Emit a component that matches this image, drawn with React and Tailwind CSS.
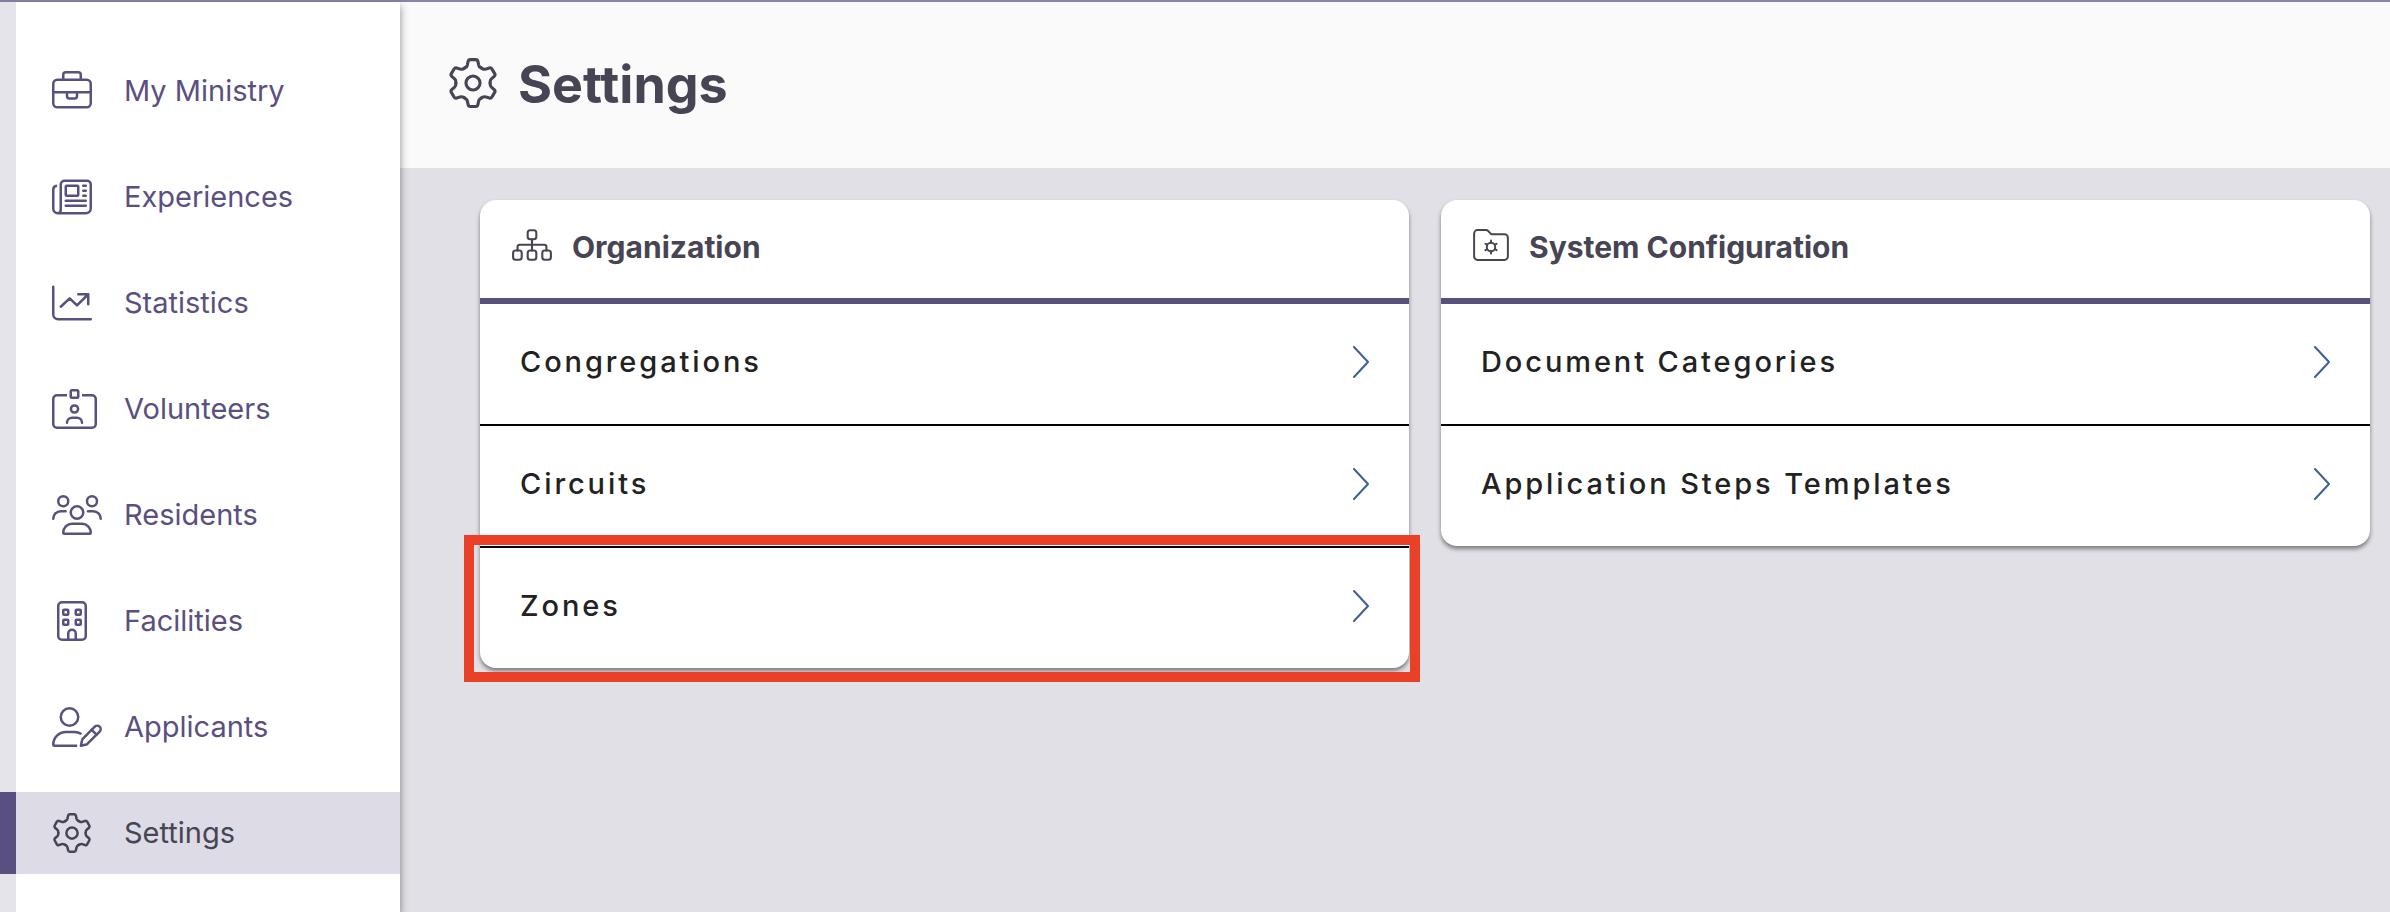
import clsx from 'clsx';

// Every icon is drawn on a 512 high grid, the wider ones only grow sideways
function Icon({ width = 512, stroke = 32, className, children }) {
  return (
    <svg
      viewBox={`0 0 ${width} 512`}
      className={className}
      fill="none"
      stroke="currentColor"
      strokeWidth={stroke}
      strokeLinecap="round"
      strokeLinejoin="round"
      aria-hidden="true"
    >
      {children}
    </svg>
  );
}

function BriefcaseIcon() {
  return (
    <Icon className="h-10 w-10">
      <rect x="16" y="112" width="480" height="352" rx="52" />
      <path d="M144 112V48a32 32 0 0 1 32-32H336a32 32 0 0 1 32 32V112" />
      <path d="M16 272H496M192 272v48a32 32 0 0 0 32 32h64a32 32 0 0 0 32-32v-48" />
    </Icon>
  );
}

function NewspaperIcon() {
  return (
    <Icon className="h-10 w-10">
      <path
        strokeLinecap="butt"
        d="M64 112C36 114 16 132 16 160V404a60 60 0 0 0 60 60H432a64 64 0 0 0 64-64V96a48 48 0 0 0-48-48H160a48 48 0 0 0-48 48V416c0 28-16 48-40 48"
      />
      <rect x="176" y="112" width="160" height="128" rx="12" />
      <path d="M400 112H432M400 176H432M400 240H432M176 304H432M176 368H432" />
    </Icon>
  );
}

function ChartIcon() {
  return (
    <Icon className="h-10 w-10">
      <path d="M16 48V400a64 64 0 0 0 64 64H496" />
      <path d="M112 304 226 196 320 286 464 144M336 144H464V272" />
    </Icon>
  );
}

function BadgeIcon() {
  return (
    <Icon width={576} className="h-10 w-[45px]">
      <path
        strokeLinecap="butt"
        d="M192 80H64a48 48 0 0 0-48 48V448a48 48 0 0 0 48 48H512a48 48 0 0 0 48-48V128a48 48 0 0 0-48-48H384"
      />
      <rect x="240" y="16" width="96" height="96" rx="16" />
      <circle cx="288" cy="256" r="46" />
      <path d="M192 432a64 64 0 0 1 64-64h64a64 64 0 0 1 64 64" />
    </Icon>
  );
}

function PeopleIcon() {
  return (
    <Icon width={640} className="h-10 w-[50px]">
      <circle cx="144" cy="80" r="64" />
      <circle cx="512" cy="80" r="64" />
      <circle cx="320" cy="224" r="80" />
      <path d="M16 304a96 96 0 0 1 96-96h62M624 304a96 96 0 0 0-96-96h-68" />
      <path d="M144 480a112 112 0 0 1 112-112h128a112 112 0 0 1 112 112a16 16 0 0 1-16 16H160a16 16 0 0 1-16-16z" />
    </Icon>
  );
}

function BuildingIcon() {
  return (
    <Icon className="h-10 w-10">
      <rect x="80" y="16" width="352" height="480" rx="48" />
      <rect x="144" y="112" width="64" height="64" rx="10" />
      <rect x="304" y="112" width="64" height="64" rx="10" />
      <rect x="144" y="240" width="64" height="64" rx="10" />
      <rect x="304" y="240" width="64" height="64" rx="10" />
      <path d="M208 496V416a48 48 0 0 1 96 0V496" />
    </Icon>
  );
}

function UserPenIcon() {
  return (
    <Icon width={640} className="h-10 w-[50px]">
      <circle cx="224" cy="128" r="112" />
      <path
        strokeLinecap="butt"
        d="M378 346C350 330 318 320 286 320H178C89 320 16 393 16 482a14 14 0 0 0 14 14H322"
      />
      <path d="M370 496 384 426Q386 414 396 404L548 252a43 43 0 0 1 62 62L458 466Q450 476 438 480Z" />
      <path d="M508 292l62 62" />
    </Icon>
  );
}

const toothAngles = [0, 60, 120, 180, 240, 300];

function GearIcon({ className }) {
  return (
    <Icon className={className}>
      <circle cx="256" cy="256" r="72" />
      {toothAngles.map((angle) => (
        <path
          key={angle}
          transform={`translate(256 256) rotate(${angle})`}
          d="M-88-152-76-159Q-62-167-58-184L-50-222Q-46-240-28-240H28Q46-240 50-222L58-184Q62-167 76-159L88-152"
        />
      ))}
    </Icon>
  );
}

function SitemapIcon() {
  return (
    <Icon width={576} stroke={30} className="h-9 w-10">
      <rect x="226" y="44" width="124" height="128" rx="36" />
      <rect x="16" y="336" width="124" height="132" rx="36" />
      <rect x="226" y="336" width="124" height="132" rx="36" />
      <rect x="436" y="336" width="124" height="132" rx="36" />
      <path d="M288 172V336M80 336V284a32 32 0 0 1 32-32H464a32 32 0 0 1 32 32V336" />
    </Icon>
  );
}

function FolderGearIcon() {
  return (
    <Icon stroke={28} className="h-9 w-9">
      <path d="M64 44H186Q204 44 216 56L262 104H448a48 48 0 0 1 48 48V420a48 48 0 0 1-48 48H64a48 48 0 0 1-48-48V92a48 48 0 0 1 48-48z" />
      <circle cx="256" cy="284" r="60" />
      {toothAngles.map((angle) => (
        <path key={angle} transform={`translate(256 284) rotate(${angle})`} d="M0-64V-92" />
      ))}
    </Icon>
  );
}

function ChevronIcon() {
  return (
    <svg
      viewBox="0 0 16 32"
      className="h-8 w-4 text-[#3f5f9b]"
      fill="none"
      stroke="currentColor"
      strokeWidth="2"
      strokeLinecap="round"
      strokeLinejoin="round"
      aria-hidden="true"
    >
      <path d="M1 1 15 16 1 31" />
    </svg>
  );
}

const navItems = [
  { label: 'My Ministry', icon: <BriefcaseIcon /> },
  { label: 'Experiences', icon: <NewspaperIcon /> },
  { label: 'Statistics', icon: <ChartIcon /> },
  { label: 'Volunteers', icon: <BadgeIcon /> },
  { label: 'Residents', icon: <PeopleIcon /> },
  { label: 'Facilities', icon: <BuildingIcon /> },
  { label: 'Applicants', icon: <UserPenIcon /> },
  { label: 'Settings', icon: <GearIcon className="h-10 w-10" />, active: true },
];

const sections = [
  {
    title: 'Organization',
    icon: <SitemapIcon />,
    links: [{ label: 'Congregations' }, { label: 'Circuits' }, { label: 'Zones', highlighted: true }],
  },
  {
    title: 'System Configuration',
    icon: <FolderGearIcon />,
    links: [{ label: 'Document Categories' }, { label: 'Application Steps Templates' }],
  },
];

function Sidebar() {
  return (
    <nav className="relative z-10 w-[400px] shrink-0 bg-white shadow-[0_4px_8px_rgba(0,0,0,0.45)]">
      <ul className="flex min-h-full flex-col gap-6 bg-linear-to-r from-[#e6e4eb] from-[16px] to-white to-[16px] pt-12">
        {navItems.map((item) => (
          <li key={item.label}>
            <a
              href="#"
              aria-current={item.active ? 'page' : undefined}
              className={clsx(
                'flex h-[82px] items-center border-l-16 pl-9 text-[29px]',
                item.active
                  ? 'border-[#5a5080] bg-[#dddbe5] text-[#474554]'
                  : 'border-transparent text-[#5a5080]'
              )}
            >
              <span className="w-[72px] shrink-0">{item.icon}</span>
              {item.label}
            </a>
          </li>
        ))}
      </ul>
    </nav>
  );
}

function SettingsCard({ title, icon, links }) {
  return (
    <section className="flex-1 rounded-2xl bg-white shadow-[0_3px_4px_rgba(0,0,0,0.45)]">
      <div className="flex h-[104px] items-center gap-5 border-b-6 border-[#5a5080] px-8 pb-2 text-[#474554]">
        {icon}
        <h2 className="pt-1 text-[30px] font-bold">{title}</h2>
      </div>
      <ul className="divide-y-2 divide-black">
        {links.map((link) => (
          <li key={link.label} className="relative">
            <a
              href="#"
              className="flex h-[120px] items-center justify-between px-10 pb-1 text-[29px] font-medium tracking-widest text-[#222222]"
            >
              {link.label}
              <ChevronIcon />
            </a>
            {link.highlighted && (
              <div className="pointer-events-none absolute -top-[13px] -right-[11px] -bottom-[14px] -left-4 border-10 border-[#ea4027]" />
            )}
          </li>
        ))}
      </ul>
    </section>
  );
}

export default function App() {
  return (
    <div className="flex min-h-screen border-t-2 border-[#8b83a8] bg-[#e1e0e6] font-['Inter',sans-serif]">
      <Sidebar />
      <main className="min-w-0 flex-1">
        <header className="flex h-[166px] items-center gap-5 bg-[#fafafa] pl-12 pb-1 text-[#474554]">
          <GearIcon className="h-[50px] w-[50px]" />
          <h1 className="pt-1 text-[52px] font-bold">Settings</h1>
        </header>
        <div className="flex items-start gap-8 pt-8 pr-5 pl-20">
          {sections.map((section) => (
            <SettingsCard key={section.title} {...section} />
          ))}
        </div>
      </main>
    </div>
  );
}
